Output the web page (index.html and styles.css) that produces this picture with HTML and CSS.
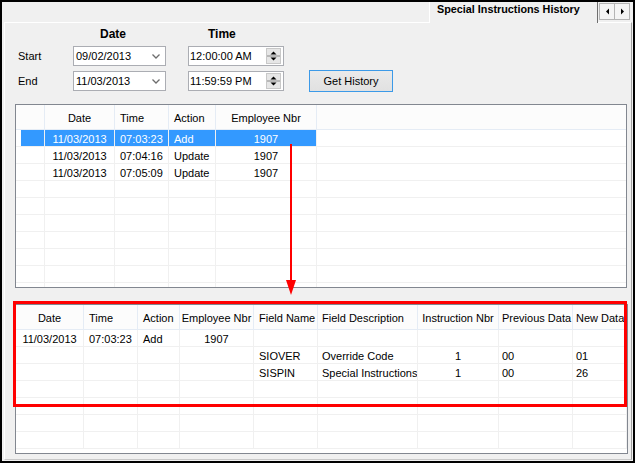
FILE: index.html
```html
<!DOCTYPE html>
<html>
<head>
<meta charset="utf-8">
<link rel="stylesheet" href="styles.css">
</head>
<body>
<div class="window">
  <div class="tabstrip">
    <div class="tab">Special Instructions History</div>
    <div class="scroll">
      <span class="sbtn"><svg width="3" height="7" viewBox="0 0 3 7"><polygon points="3,0.5 3,6.5 0,3.5" fill="#000"/></svg></span>
      <span class="sbtn"><svg width="3" height="7" viewBox="0 0 3 7"><polygon points="0,0.5 0,6.5 3,3.5" fill="#000"/></svg></span>
    </div>
  </div>
  <div class="panel">
    <div class="form">
      <div></div>
      <div class="colhead date-h">Date</div>
      <div class="colhead time-h">Time</div>
      <div></div>

      <div class="lbl">Start</div>
      <div class="picker date"><span>09/02/2013</span><svg class="chev" width="8" height="5" viewBox="0 0 8 5"><polyline points="0.5,0.5 4,4 7.5,0.5" fill="none" stroke="#6d6d6d" stroke-width="1.3"/></svg></div>
      <div class="picker time"><span>12:00:00 AM</span><svg class="spin" width="15" height="16" viewBox="0 0 15 16"><rect x="0.5" y="0.5" width="14" height="15" fill="#e6e6e6" stroke="#c8c8c8"/><line x1="1" y1="8" x2="14" y2="8" stroke="#8a8a8a"/><polygon points="4.5,6.5 10.5,6.5 7.5,3.5" fill="#000"/><polygon points="4.5,9.5 10.5,9.5 7.5,12.5" fill="#000"/></svg></div>
      <div></div>

      <div class="lbl">End</div>
      <div class="picker date"><span>11/03/2013</span><svg class="chev" width="8" height="5" viewBox="0 0 8 5"><polyline points="0.5,0.5 4,4 7.5,0.5" fill="none" stroke="#6d6d6d" stroke-width="1.3"/></svg></div>
      <div class="picker time"><span>11:59:59 PM</span><svg class="spin" width="15" height="16" viewBox="0 0 15 16"><rect x="0.5" y="0.5" width="14" height="15" fill="#e6e6e6" stroke="#c8c8c8"/><line x1="1" y1="8" x2="14" y2="8" stroke="#8a8a8a"/><polygon points="4.5,6.5 10.5,6.5 7.5,3.5" fill="#000"/><polygon points="4.5,9.5 10.5,9.5 7.5,12.5" fill="#000"/></svg></div>
      <button class="gethistory">Get History</button>
    </div>

    <div class="grid top">
      <div class="row hrow"><div class="c"></div><div class="c ctr">Date</div><div class="c">Time</div><div class="c">Action</div><div class="c ctr">Employee Nbr</div><div class="c fill"></div></div>
      <div class="row sel"><div class="c rh"></div><div class="c ctr">11/03/2013</div><div class="c">07:03:23</div><div class="c">Add</div><div class="c ctr">1907</div><div class="c fill"></div></div>
      <div class="row"><div class="c"></div><div class="c ctr">11/03/2013</div><div class="c">07:04:16</div><div class="c">Update</div><div class="c ctr">1907</div><div class="c fill"></div></div>
      <div class="row"><div class="c"></div><div class="c ctr">11/03/2013</div><div class="c">07:05:09</div><div class="c">Update</div><div class="c ctr">1907</div><div class="c fill"></div></div>
      <div class="row"><div class="c"></div><div class="c"></div><div class="c"></div><div class="c"></div><div class="c"></div><div class="c fill"></div></div>
      <div class="row"><div class="c"></div><div class="c"></div><div class="c"></div><div class="c"></div><div class="c"></div><div class="c fill"></div></div>
      <div class="row"><div class="c"></div><div class="c"></div><div class="c"></div><div class="c"></div><div class="c"></div><div class="c fill"></div></div>
      <div class="row"><div class="c"></div><div class="c"></div><div class="c"></div><div class="c"></div><div class="c"></div><div class="c fill"></div></div>
      <div class="row"><div class="c"></div><div class="c"></div><div class="c"></div><div class="c"></div><div class="c"></div><div class="c fill"></div></div>
      <div class="row"><div class="c"></div><div class="c"></div><div class="c"></div><div class="c"></div><div class="c"></div><div class="c fill"></div></div>
      <div class="row"><div class="c"></div><div class="c"></div><div class="c"></div><div class="c"></div><div class="c"></div><div class="c fill"></div></div>
    </div>

    <div class="grid bottom">
      <div class="row hrow"><div class="c ctr">Date</div><div class="c">Time</div><div class="c">Action</div><div class="c ctr">Employee Nbr</div><div class="c">Field Name</div><div class="c p4">Field Description</div><div class="c ctr">Instruction Nbr</div><div class="c p3">Previous Data</div><div class="c p3">New Data</div></div>
      <div class="row"><div class="c ctr">11/03/2013</div><div class="c">07:03:23</div><div class="c">Add</div><div class="c ctr">1907</div><div class="c"></div><div class="c p4"></div><div class="c ctr"></div><div class="c p3"></div><div class="c p3"></div></div>
      <div class="row"><div class="c ctr"></div><div class="c"></div><div class="c"></div><div class="c ctr"></div><div class="c">SIOVER</div><div class="c p4">Override Code</div><div class="c ctr">1</div><div class="c p3">00</div><div class="c p3">01</div></div>
      <div class="row"><div class="c ctr"></div><div class="c"></div><div class="c"></div><div class="c ctr"></div><div class="c">SISPIN</div><div class="c p4">Special Instructions</div><div class="c ctr">1</div><div class="c p3">00</div><div class="c p3">26</div></div>
      <div class="row"><div class="c"></div><div class="c"></div><div class="c"></div><div class="c"></div><div class="c"></div><div class="c"></div><div class="c"></div><div class="c"></div><div class="c"></div></div>
      <div class="row"><div class="c"></div><div class="c"></div><div class="c"></div><div class="c"></div><div class="c"></div><div class="c"></div><div class="c"></div><div class="c"></div><div class="c"></div></div>
      <div class="row"><div class="c"></div><div class="c"></div><div class="c"></div><div class="c"></div><div class="c"></div><div class="c"></div><div class="c"></div><div class="c"></div><div class="c"></div></div>
      <div class="row"><div class="c"></div><div class="c"></div><div class="c"></div><div class="c"></div><div class="c"></div><div class="c"></div><div class="c"></div><div class="c"></div><div class="c"></div></div>
    </div>

    <svg class="arrow" width="12" height="153" viewBox="0 0 12 153">
      <rect x="5" y="1" width="2" height="140" fill="#ff0000"/>
      <polygon points="1,137 11,137 6,152" fill="#ff0000"/>
    </svg>
    <div class="highlight"></div>
  </div>
</div>
</body>
</html>
```

FILE: styles.css
```css
* { box-sizing: border-box; }

body {
  margin: 0;
  font-family: "Liberation Sans", Arial, sans-serif;
  font-size: 11px;
  color: #000;
  background: #fff;
}

.window {
  width: 635px;
  height: 463px;
  border: 2px solid #000;
  background: #f0f0f0;
  display: flex;
  flex-direction: column;
}

/* tab strip */
.tabstrip {
  height: 20px;
  flex: none;
  display: flex;
  justify-content: flex-end;
  align-items: flex-start;
  padding-right: 3px;
}

.tab {
  width: 169px;
  height: 21px;
  margin-bottom: -1px;
  border-left: 1px solid #fff;
  border-right: 1px solid #6f6f6f;
  padding-left: 7px;
  font-weight: bold;
  font-size: 10.8px;
  line-height: 15px;
  background: #f0f0f0;
  position: relative;
  z-index: 1;
  white-space: nowrap;
}

.scroll {
  display: flex;
  margin-top: 1px;
  margin-left: 1px;
}

.sbtn {
  width: 16px;
  height: 17px;
  border: 1px solid #b4b4b4;
  background: #f4f4f4;
  display: flex;
  align-items: center;
  justify-content: center;
}
.sbtn + .sbtn { border-left: none; width: 15px; }

/* tab page */
.panel {
  flex: 1;
  margin: 0 1px 1px 2px;
  border-top: 1px solid #fff;
  border-left: 1px solid #fff;
  border-right: 1px solid #a0a0a0;
  border-bottom: 1px solid #c8c8c8;
  position: relative;
}

.form {
  padding: 5px 0 0 13px;
  display: grid;
  grid-template-columns: 55px 115px 121px 84px;
  grid-template-rows: 13px 20px 20px;
  row-gap: 5px;
}

.colhead {
  font-size: 12px;
  font-weight: bold;
  line-height: 13px;
}
.date-h { padding-left: 27px; }
.time-h { padding-left: 20px; }

.lbl {
  line-height: 20px;
}

.picker {
  height: 20px;
  border: 1px solid #abadb3;
  background: #fff;
  display: flex;
  align-items: center;
  padding-left: 2px;
  line-height: 18px;
  white-space: nowrap;
}
.picker.date { width: 93px; }
.picker.time { width: 96px; padding-left: 1px; }

.chev { margin-left: auto; margin-right: 5px; }
.spin { margin-left: auto; margin-right: 2px; }

.gethistory {
  width: 84px;
  height: 22px;
  margin-top: -1px;
  border: 1px solid #3c9ae8;
  background: linear-gradient(#eaeaea, #e1e1e1);
  font-family: inherit;
  font-size: 11px;
  color: #000;
  padding: 0;
  line-height: 20px;
}

/* grids */
.grid {
  margin-left: 10px;
  border: 1px solid #828790;
  background: #fff;
  overflow: hidden;
}
.grid.top { margin-top: 13px; width: 612px; height: 184px; }
.grid.bottom { margin-top: 16px; width: 613px; height: 150px; }

.row {
  display: grid;
  height: 17px;
  border-bottom: 1px solid #f0f0f0;
}
.top .row { grid-template-columns: 29px 70px 54px 47px 101px 1fr; }
.bottom .row { grid-template-columns: 68px 54px 42px 74px 64px 100px 81px 74px 1fr; }

.c {
  border-right: 1px solid #f0f0f0;
  padding: 1px 0 0 5px;
  line-height: 16px;
  white-space: nowrap;
  overflow: hidden;
}
.c.ctr { padding-left: 0; text-align: center; }
.c.p4 { padding-left: 4px; }
.c.p3 { padding-left: 3px; }
.c.fill { border-right: none; }

.row.hrow {
  height: 25px;
  background: #fcfcfc;
  border-bottom: 1px solid #e5ecf5;
}
.hrow .c {
  border-right-color: #e5ecf5;
  line-height: 26px;
  padding-top: 0;
}

.sel .c { background: #3399ff; color: #fff; }
.sel .c.rh { background: linear-gradient(to right, #fff 5px, #3399ff 5px); }
.sel .c.fill { background: #fff; }

/* annotations */
.arrow {
  position: absolute;
  left: 280px;
  top: 120px;
}

.highlight {
  position: absolute;
  left: 8px;
  top: 278px;
  width: 614px;
  height: 106px;
  border: 3px solid #ff0000;
}
```
